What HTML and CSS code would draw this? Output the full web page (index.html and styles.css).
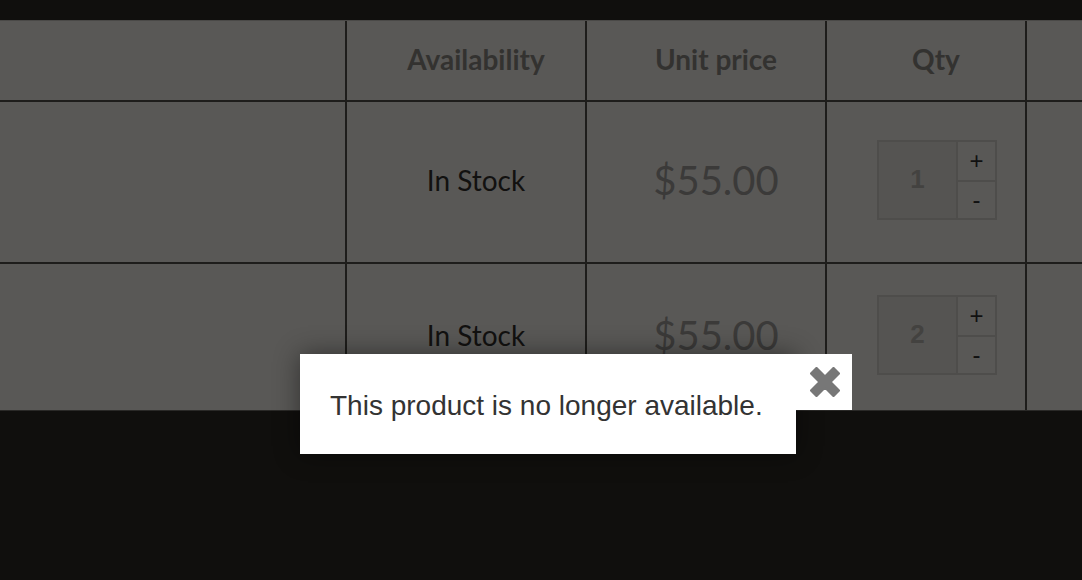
FILE: index.html
```html
<!DOCTYPE html>
<html>
<head>
<meta charset="utf-8">
<link rel="stylesheet" href="styles.css">
</head>
<body>
<div class="topbar"></div>
<div class="cart">
  <div class="row head">
    <div class="cell"></div>
    <div class="cell">Availability</div>
    <div class="cell">Unit price</div>
    <div class="cell">Qty</div>
    <div class="cell last"></div>
  </div>
  <div class="row item first">
    <div class="cell"></div>
    <div class="cell stock">In Stock</div>
    <div class="cell price">$55.00</div>
    <div class="cell"><div class="qty"><div class="qty-val">1</div><div class="qty-btns"><div class="qbtn">+</div><div class="qbtn">-</div></div></div></div>
    <div class="cell last"></div>
  </div>
  <div class="row item second">
    <div class="cell"></div>
    <div class="cell stock">In Stock</div>
    <div class="cell price">$55.00</div>
    <div class="cell"><div class="qty"><div class="qty-val">2</div><div class="qty-btns"><div class="qbtn">+</div><div class="qbtn">-</div></div></div></div>
    <div class="cell last"></div>
  </div>
</div>
<div class="popup">
  <p class="msg">This product is no longer available.</p>
  <button class="close" aria-label="Close">
    <svg width="30" height="30" viewBox="0 0 30 30"><path d="M0.5 6.5 L6.5 0.5 L15 9 L23.5 0.5 L29.5 6.5 L21 15 L29.5 23.5 L23.5 29.5 L15 21 L6.5 29.5 L0.5 23.5 L9 15 Z" fill="#777" stroke="#777" stroke-width="1.5" stroke-linejoin="round"/></svg>
  </button>
</div>
</body>
</html>
```

FILE: styles.css
```css
html, body {
  margin: 0;
  padding: 0;
  background: #100f0d;
  height: 100%;
  overflow: hidden;
}
.topbar {
  height: 20px;
  background: #100f0d;
}
.cart {
  background: #595856;
  font-family: Lato, "Liberation Sans", sans-serif;
  border-top: 1px solid #4a4947;
}
.row {
  display: grid;
  grid-template-columns: 347px 240px 240px 200px 1fr;
}
.row .cell {
  border-right: 2px solid #1e1d1b;
  display: flex;
  align-items: center;
  justify-content: center;
  padding-left: 20px;
}
.row .cell:first-child { padding-left: 0; }
.row .cell.last { border-right: none; }
.head {
  height: 79px;
  border-bottom: 2px solid #1e1d1b;
  font-weight: bold;
  font-size: 28px;
  color: #333230;
}
.head .cell { padding-bottom: 3px; }
.head .cell:first-child { padding-bottom: 0; }
.item .cell { padding-bottom: 5px; }
.item .cell:first-child { padding-bottom: 0; }
.item.first {
  height: 160px;
  border-bottom: 2px solid #1e1d1b;
}
.item.second {
  height: 146px;
  border-bottom: 1px solid #2a2927;
}
.stock {
  font-size: 28px;
  color: #121110;
}
.price {
  font-size: 40px;
  color: #3b3a39;
}
.qty {
  display: flex;
  border: 2px solid #4e4d4b;
  margin-left: 2px;
}
.qty-val {
  width: 77px;
  height: 76px;
  background: #555452;
  display: flex;
  align-items: center;
  justify-content: center;
  font-size: 26px;
  color: #434240;
  font-weight: bold;
  font-family: "Liberation Sans", sans-serif;
}
.qty-btns {
  display: flex;
  flex-direction: column;
  border-left: 2px solid #4e4d4b;
}
.qbtn {
  width: 37px;
  height: 38px;
  display: flex;
  align-items: center;
  justify-content: center;
  font-family: "Liberation Sans", sans-serif;
  font-size: 24px;
  color: #111;
}
.qbtn + .qbtn { border-top: 2px solid #4e4d4b; height: 36px; }
.popup {
  position: absolute;
  left: 300px;
  top: 354px;
  width: 496px;
  height: 100px;
  background: #fff;
  box-shadow: 0 0 24px rgba(0,0,0,0.45);
  display: flex;
  align-items: center;
}
.msg {
  margin: 3px 0 0 30px;
  font-family: "Liberation Sans", Arial, sans-serif;
  font-size: 28px;
  color: #333;
}
.close {
  position: absolute;
  left: 496px;
  top: 0;
  width: 56px;
  height: 56px;
  background: #fff;
  border: none;
  padding: 0 0 0 2px;
  display: flex;
  align-items: center;
  justify-content: center;
}
```
